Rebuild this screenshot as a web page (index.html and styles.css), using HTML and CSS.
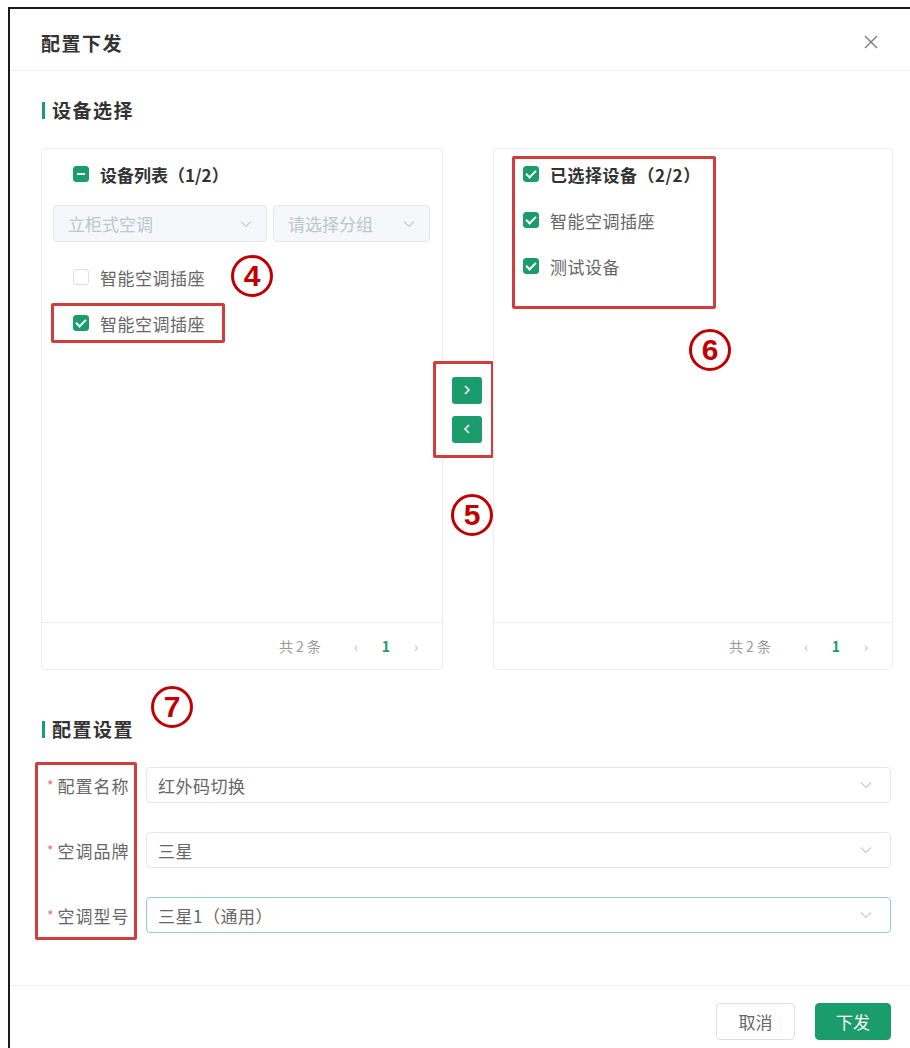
FILE: index.html
```html
<!DOCTYPE html>
<html lang="zh-CN">
    <head>
        <meta charset="UTF-8" />
        <meta name="viewport" content="width=device-width, initial-scale=1.0" />
        <title>配置下发</title>
        <link rel="stylesheet" href="styles.css">
    </head>
    <body>
        <div class="dialog">
            <div class="dialog-header">
                <span class="dialog-title">配置下发</span>
                <button class="close" aria-label="关闭">
                    <svg width="16" height="16" viewBox="0 0 16 16"><path d="M2 2L14 14M14 2L2 14" stroke="#777" stroke-width="1.3" fill="none"/></svg>
                </button>
            </div>

            <div class="dialog-body">
                <div class="section-title">设备选择</div>

                <div class="transfer">
                    <!-- left: source list -->
                    <div class="panel">
                        <div class="panel-main">
                            <div class="panel-head"><span class="cb half"></span>设备列表（1/2）</div>
                            <div class="filters">
                                <div class="select disabled">立柜式空调
                                    <svg width="12" height="8" viewBox="0 0 12 8"><path d="M1 1.5L6 6.5L11 1.5" stroke="#c8ccd2" stroke-width="1.2" fill="none"/></svg>
                                </div>
                                <div class="select disabled">请选择分组
                                    <svg width="12" height="8" viewBox="0 0 12 8"><path d="M1 1.5L6 6.5L11 1.5" stroke="#c8ccd2" stroke-width="1.2" fill="none"/></svg>
                                </div>
                            </div>
                            <ul class="items">
                                <li class="item"><span class="cb"></span>智能空调插座</li>
                                <li class="item mark"><span class="cb on"></span>智能空调插座</li>
                            </ul>
                        </div>
                        <div class="panel-foot">
                            <span class="total">共 2 条</span>
                            <span class="pager">‹</span>
                            <span class="pager current">1</span>
                            <span class="pager">›</span>
                        </div>
                    </div>

                    <!-- middle: move buttons -->
                    <div class="actions">
                        <div class="actions-box mark">
                            <button class="move">
                                <svg width="10" height="12" viewBox="0 0 10 12"><path d="M3 2L7 6L3 10" stroke="#fff" stroke-width="1.6" fill="none"/></svg>
                            </button>
                            <button class="move">
                                <svg width="10" height="12" viewBox="0 0 10 12"><path d="M7 2L3 6L7 10" stroke="#fff" stroke-width="1.6" fill="none"/></svg>
                            </button>
                        </div>
                    </div>

                    <!-- right: chosen list -->
                    <div class="panel">
                        <div class="panel-main">
                            <div class="chosen mark">
                                <div class="chosen-row head"><span class="cb on"></span>已选择设备（2/2）</div>
                                <div class="chosen-row"><span class="cb on"></span>智能空调插座</div>
                                <div class="chosen-row"><span class="cb on"></span>测试设备</div>
                            </div>
                        </div>
                        <div class="panel-foot">
                            <span class="total">共 2 条</span>
                            <span class="pager">‹</span>
                            <span class="pager current">1</span>
                            <span class="pager">›</span>
                        </div>
                    </div>
                </div>

                <div class="section-title second">配置设置</div>

                <div class="form">
                    <div class="labels mark">
                        <div class="label"><span class="req">*</span>配置名称</div>
                        <div class="label"><span class="req">*</span>空调品牌</div>
                        <div class="label"><span class="req">*</span>空调型号</div>
                    </div>
                    <div class="fields">
                        <div class="field">红外码切换
                            <svg width="12" height="8" viewBox="0 0 12 8"><path d="M1 1.5L6 6.5L11 1.5" stroke="#c8ccd2" stroke-width="1.2" fill="none"/></svg>
                        </div>
                        <div class="field">三星
                            <svg width="12" height="8" viewBox="0 0 12 8"><path d="M1 1.5L6 6.5L11 1.5" stroke="#c8ccd2" stroke-width="1.2" fill="none"/></svg>
                        </div>
                        <div class="field focus">三星1（通用）
                            <svg width="12" height="8" viewBox="0 0 12 8"><path d="M1 1.5L6 6.5L11 1.5" stroke="#c8ccd2" stroke-width="1.2" fill="none"/></svg>
                        </div>
                    </div>
                </div>
            </div>

            <div class="dialog-footer">
                <button class="btn">取消</button>
                <button class="btn primary">下发</button>
            </div>

            <!-- annotation markers -->
            <span class="badge badge-4">4</span>
            <span class="badge badge-5">5</span>
            <span class="badge badge-6">6</span>
            <span class="badge badge-7">7</span>
        </div>
    </body>
</html>
```

FILE: styles.css
```css
* {
    box-sizing: border-box;
}

body {
    margin: 0;
    font-family: "Noto Sans CJK SC", "Noto Sans", sans-serif;
    font-size: 17px;
    color: #666;
    background-color: #fff;
}

.dialog {
    position: relative;
    margin: 7px 0 0 8px;
    border-top: 2px solid #1a1a1a;
    border-left: 2px solid #1a1a1a;
    background-color: #fff;
}

.dialog-header {
    display: flex;
    align-items: center;
    justify-content: space-between;
    height: 62px;
    padding: 5px 31px 0 31px;
    border-bottom: 1px solid #f0f0f0;
}

.dialog-title {
    font-size: 19px;
    font-weight: bold;
    color: #333;
    letter-spacing: 1.5px;
}

.close {
    border: none;
    background: none;
    padding: 0;
    display: flex;
    cursor: pointer;
}

.dialog-body {
    padding: 29px 17px 45px 31px;
}

.section-title {
    display: flex;
    align-items: center;
    line-height: 20px;
    font-size: 19px;
    font-weight: bold;
    color: #333;
    letter-spacing: 1.5px;
    margin-bottom: 28px;
}

.section-title::before {
    content: "";
    width: 3px;
    height: 17px;
    margin: 0 7px 0 1px;
    background-color: #1b9c6c;
}

.section-title.second {
    margin-top: 49px;
    margin-bottom: 23px;
}

.mark {
    border: 3px solid #d23c3c;
    border-radius: 2px;
}

/* transfer */
.transfer {
    display: grid;
    grid-template-columns: 402px 50px 400px;
    height: 522px;
}

.panel {
    display: flex;
    flex-direction: column;
    border: 1px solid #ebeef5;
    border-radius: 4px;
}

.panel-main {
    flex: 1;
}

.panel-head {
    display: flex;
    align-items: center;
    gap: 11px;
    height: 50px;
    padding-left: 31px;
    font-weight: bold;
    color: #333;
}

.filters {
    display: grid;
    grid-template-columns: 214px 1fr;
    gap: 6px;
    margin: 6px 12px 0 11px;
}

.select {
    display: flex;
    align-items: center;
    justify-content: space-between;
    height: 37px;
    padding: 0 14px;
    border: 1px solid #e4e7ed;
    border-radius: 4px;
}

.select.disabled {
    background-color: #f5f7fa;
    color: #c0c4cc;
}

.items {
    list-style: none;
    margin: 15px 0 0 9px;
    padding: 0;
}

.item {
    display: flex;
    align-items: center;
    gap: 11px;
    width: fit-content;
    height: 40px;
    padding: 0 17px 0 19px;
    border: 3px solid transparent;
    letter-spacing: 0.5px;
}

.item + .item {
    margin-top: 6px;
}

.item.mark {
    border-color: #d23c3c;
}

.cb {
    position: relative;
    flex: none;
    width: 16px;
    height: 16px;
    border: 1px solid #dcdfe6;
    border-radius: 3px;
    background-color: #fff;
}

.cb.on,
.cb.half {
    background-color: #1b9c6c;
    border-color: #1b9c6c;
}

.cb.on::after {
    content: "";
    position: absolute;
    left: 4px;
    top: 1px;
    width: 4px;
    height: 8px;
    border: solid #fff;
    border-width: 0 2px 2px 0;
    transform: rotate(45deg);
}

.cb.half::after {
    content: "";
    position: absolute;
    left: 3px;
    top: 6px;
    width: 8px;
    height: 2px;
    background-color: #fff;
}

.panel-foot {
    display: flex;
    align-items: center;
    justify-content: flex-end;
    height: 47px;
    padding-right: 11px;
    border-top: 1px solid #ebeef5;
    font-size: 14px;
    color: #999;
}

.total {
    margin-right: 20px;
}

.pager {
    width: 30px;
    text-align: center;
    color: #bbb;
}

.pager.current {
    color: #1b9c6c;
    font-weight: bold;
}

.actions {
    display: flex;
    align-items: center;
}

.actions-box {
    display: flex;
    flex-direction: column;
    gap: 12px;
    width: 61px;
    margin-left: -10px;
    padding: 13px 9px 12px 16px;
    background-color: #fff;
}

.move {
    display: flex;
    align-items: center;
    justify-content: center;
    width: 30px;
    height: 27px;
    padding: 0;
    border: none;
    border-radius: 3px;
    background-color: #1b9c6c;
    cursor: pointer;
}

.chosen {
    display: flex;
    flex-direction: column;
    gap: 16px;
    width: 204px;
    margin: 7px 0 0 18px;
    padding: 0 0 25px 8px;
}

.chosen-row {
    display: flex;
    align-items: center;
    gap: 11px;
    height: 30px;
    letter-spacing: 0.5px;
}

.chosen-row.head {
    font-weight: bold;
    color: #333;
}

/* form */
.form {
    display: flex;
    gap: 9px;
    margin-left: -6px;
}

.labels {
    display: flex;
    flex-direction: column;
    gap: 29px;
    width: 102px;
    padding: 2px 4px 4px 9px;
}

.label {
    display: flex;
    align-items: center;
    height: 36px;
    letter-spacing: 1px;
    white-space: nowrap;
}

.req {
    color: #f56c6c;
    margin-right: 3px;
    font-size: 14px;
}

.fields {
    flex: 1;
    display: flex;
    flex-direction: column;
    gap: 29px;
    margin-right: 2px;
    padding-top: 5px;
}

.field {
    display: flex;
    align-items: center;
    justify-content: space-between;
    height: 36px;
    padding: 0 18px 0 11px;
    border: 1px solid #e4e7ed;
    border-radius: 4px;
    letter-spacing: 0.5px;
}

.field.focus {
    border-color: #8fd3bd;
}

.dialog-footer {
    display: flex;
    justify-content: flex-end;
    gap: 20px;
    padding: 17px 19px 20px 0;
    border-top: 1px solid #f0f0f0;
}

.btn {
    height: 37px;
    width: 79px;
    border: 1px solid #dcdfe6;
    border-radius: 4px;
    background-color: #fff;
    font-family: inherit;
    font-size: 17px;
    color: #666;
    cursor: pointer;
}

.btn.primary {
    width: 76px;
    border-color: #1b9c6c;
    background-color: #1b9c6c;
    color: #fff;
}

/* circled step numbers laid over the screenshot */
.badge {
    position: absolute;
    display: flex;
    align-items: center;
    justify-content: center;
    width: 42px;
    height: 42px;
    border: 3.5px solid #c00000;
    border-radius: 50%;
    color: #c00000;
    font: bold 30px/1 "Liberation Sans", sans-serif;
}

.badge-4 { left: 221px; top: 246px; }
.badge-5 { left: 441px; top: 485px; }
.badge-6 { left: 679px; top: 320px; }
.badge-7 { left: 141px; top: 677px; }
```
